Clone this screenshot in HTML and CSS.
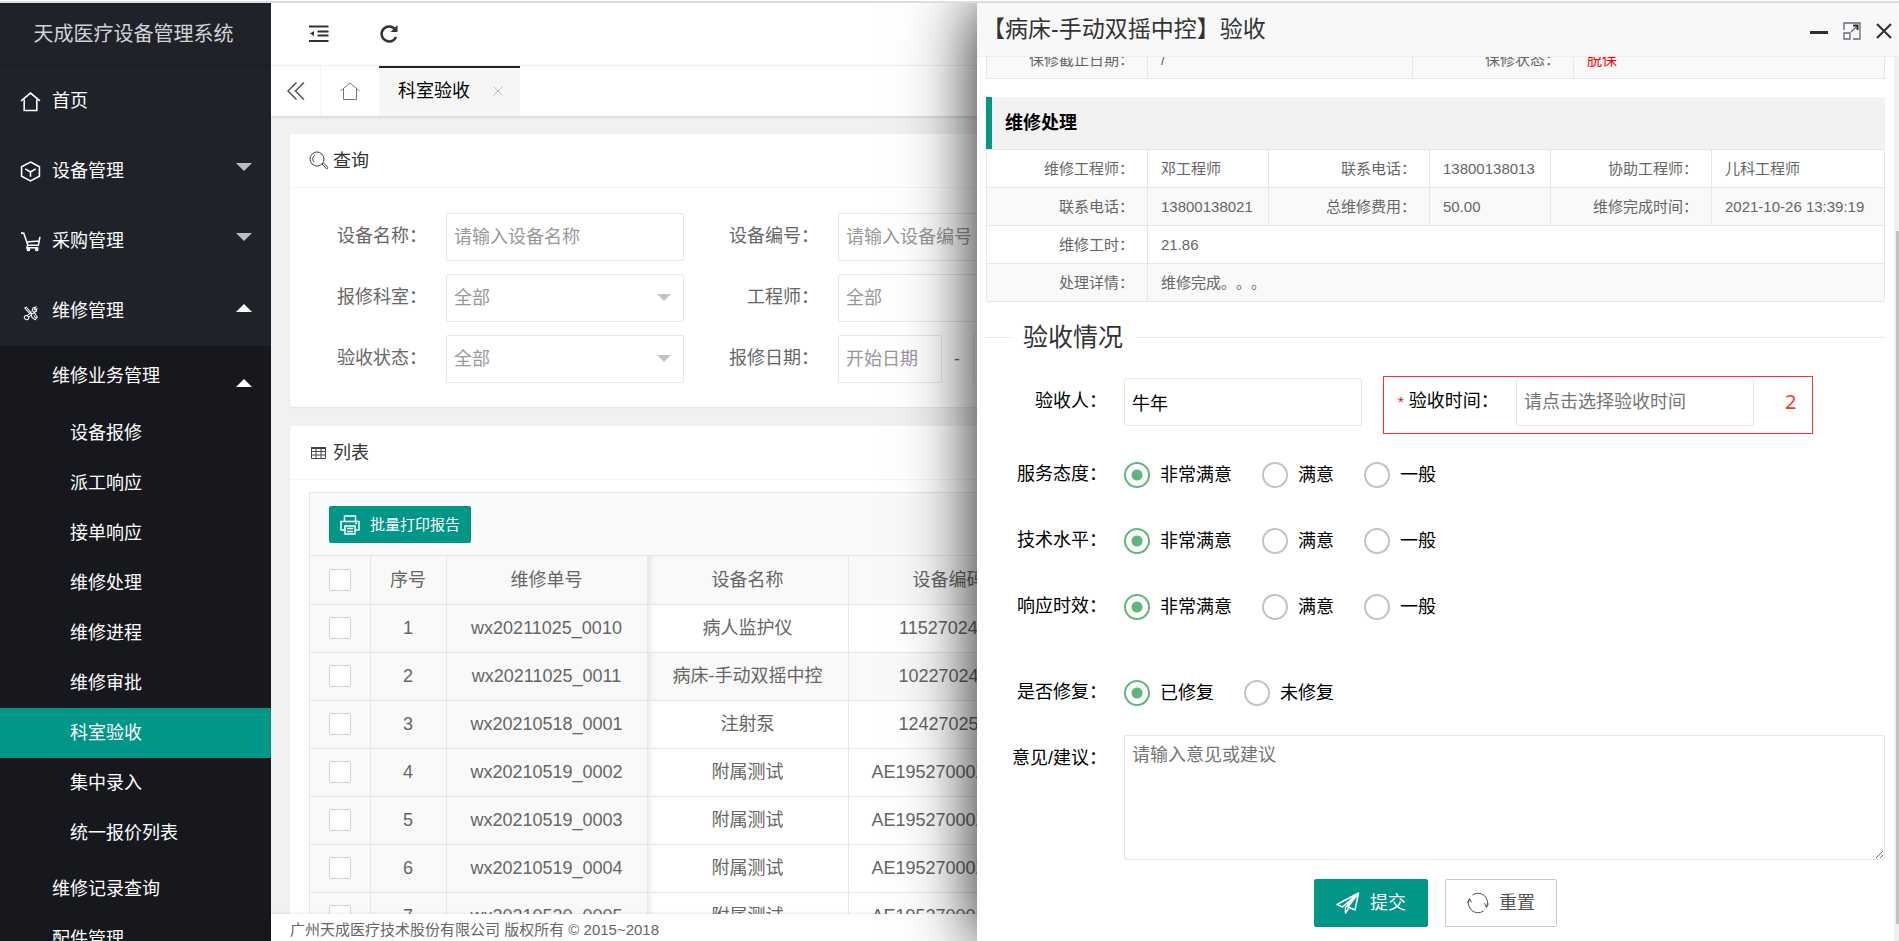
FILE: index.html
```html
<!DOCTYPE html>
<html lang="zh-CN">
<head>
<meta charset="utf-8">
<title>天成医疗设备管理系统</title>
<link rel="stylesheet" href="styles.css">
</head>
<body>
<div class="app">
  <aside class="sidebar">
    <h1 class="brand">天成医疗设备管理系统</h1>
    <nav class="menu">
      <a class="menu-item" href="#">
        <svg class="menu-icon" viewBox="0 0 20 20"><path d="M1 9.500 10 2l9 7.500M4 8v10.500h12V8"/></svg>首页</a>
      <a class="menu-item" href="#">
        <svg class="menu-icon" viewBox="0 0 20 20"><path d="M10 1l8.500 4.500v9L10 19l-8.500-4.500v-9zM5 7.500l5 3 5-3M10 10.500V15"/></svg>设备管理<span class="arrow"></span></a>
      <a class="menu-item" href="#">
        <svg class="menu-icon" viewBox="0 0 20 20"><path d="M1 2h2.500l4 11.500h10L19 5.500M6 10.500l12-1M7.500 13.500l-1 2.500h11"/><circle cx="8" cy="17.500" r="1"/><circle cx="16" cy="17.500" r="1"/></svg>采购管理<span class="arrow"></span></a>
      <a class="menu-item" href="#">
        <svg class="menu-icon tools" viewBox="0 0 20 20"><path d="M3 4l2-1 6.500 8M3 4l7 7.500M11 11l4-1 3 5-2.500 3-4-3zM16 3l-3 1-1 3 2 2 3-1 .5-3-2 1.500-1-1zM11.500 8.500 6 13M13 10l-5 5M6 13c-3-.5-4.500 2-2.500 4s5 .5 4.500-2zM14 13l2 3"/></svg>维修管理<span class="arrow arrow-up"></span></a>
      <div class="submenu">
        <a class="sub-item" href="#">维修业务管理<span class="arrow arrow-up"></span></a>
        <div class="leaf-list">
          <a class="leaf" href="#">设备报修</a>
          <a class="leaf" href="#">派工响应</a>
          <a class="leaf" href="#">接单响应</a>
          <a class="leaf" href="#">维修处理</a>
          <a class="leaf" href="#">维修进程</a>
          <a class="leaf" href="#">维修审批</a>
          <a class="leaf active" href="#">科室验收</a>
          <a class="leaf" href="#">集中录入</a>
          <a class="leaf" href="#">统一报价列表</a>
        </div>
        <a class="sub-item" href="#">维修记录查询</a>
        <a class="sub-item" href="#">配件管理</a>
      </div>
    </nav>
  </aside>

  <main class="main">
    <header class="topbar">
      <button class="icon-btn" aria-label="收起菜单"><svg width="20" height="18" viewBox="0 0 20 18"><path d="M0 1.500h19.500M8.500 6.500h11M8.500 10.500h11M0 16h19.500" stroke="#333" stroke-width="2" fill="none"/><path d="M1 8.500 5 6v5z" fill="#333"/></svg></button>
      <button class="icon-btn" aria-label="刷新"><svg width="20" height="20" viewBox="0 0 20 20"><path d="M16.500 6A7.500 7.500 0 1 0 17 13" stroke="#333" stroke-width="2.500" fill="none"/><path d="M18.500 1v7h-7z" fill="#333"/></svg></button>
    </header>
    <div class="tabs">
      <button class="tab-ctrl" aria-label="向左"><svg width="18" height="18" viewBox="0 0 18 18"><path d="M9.500.5 1 9l8.500 8.500M17 .5 8.500 9l8.500 8.500" fill="none" stroke="#555" stroke-width="1.500"/></svg></button>
      <button class="tab-home" aria-label="首页"><svg width="20" height="20" viewBox="0 0 20 20"><path d="M.5 10 10 2l9.500 8M3.500 8v10.500h13V8" fill="none" stroke="#777"/></svg></button>
      <div class="tab"><a href="#">科室验收</a><button class="tab-close" aria-label="关闭标签"><svg width="10" height="10" viewBox="0 0 10 10"><path d="M.5.500l9 9M9.500.5l-9 9" stroke="#bbb"/></svg></button></div>
    </div>

    <div class="content">
      <section class="card">
        <h2 class="card-head"><svg width="20" height="20" viewBox="0 0 20 20" fill="none" stroke="#444"><circle cx="8" cy="8" r="7"/><path d="M5 11a4.500 4.500 0 0 1 1-7M13 13l1.500-1 4 4c1 1-.5 2.500-1.500 1.500z"/></svg>查询</h2>
        <form class="search">
          <label for="devName">设备名称：</label><input id="devName" placeholder="请输入设备名称">
          <label for="devNo">设备编号：</label><input id="devNo" placeholder="请输入设备编号">
          <label for="dept">报修科室：</label><span class="select"><select id="dept"><option>全部</option></select></span>
          <label for="eng">工程师：</label><span class="select"><select id="eng"><option>全部</option></select></span>
          <label for="state">验收状态：</label><span class="select"><select id="state"><option>全部</option></select></span>
          <label for="from">报修日期：</label><span class="range"><input id="from" placeholder="开始日期"><span>-</span><input aria-label="结束日期" placeholder="结束日期"></span>
        </form>
      </section>

      <section class="card">
        <h2 class="card-head"><svg width="20" height="20" viewBox="0 0 20 20" fill="none" stroke="#444"><path d="M2.500 4.500h14v11h-14zM2.500 8.500h14M2.500 12h14M7 5v10.500M12 5v10.500"/><path d="M2 5h15" stroke-width="2"/></svg>列表</h2>
        <div class="grid">
          <div class="grid-tools"><button class="btn-print"><svg width="20" height="20" viewBox="0 0 20 20" fill="none" stroke="#fff" stroke-width="1.500"><path d="M4.500 6V1h11v5M4.500 15H1V6.500h18V15h-3.500"/><path d="M5 11h10v8H5zM7 13.500h6M7 16.500h6M15 8.500h2"/></svg>批量打印报告</button></div>
          <table class="list">
            <colgroup><col class="c-check"><col class="c-no"><col class="c-wide"><col class="c-wide"><col class="c-wide"><col></colgroup>
            <thead><tr><th><input type="checkbox" aria-label="全选"></th><th>序号</th><th>维修单号</th><th>设备名称</th><th>设备编码</th><th>报修科室</th></tr></thead>
            <tbody>
              <tr><td><input type="checkbox" aria-label="选择 1"></td><td>1</td><td>wx20211025_0010</td><td>病人监护仪</td><td>1152702401</td><td></td></tr>
              <tr class="current"><td><input type="checkbox" aria-label="选择 2"></td><td>2</td><td>wx20211025_0011</td><td>病床-手动双摇中控</td><td>1022702401</td><td></td></tr>
              <tr><td><input type="checkbox" aria-label="选择 3"></td><td>3</td><td>wx20210518_0001</td><td>注射泵</td><td>1242702501</td><td></td></tr>
              <tr><td><input type="checkbox" aria-label="选择 4"></td><td>4</td><td>wx20210519_0002</td><td>附属测试</td><td>AE1952700020001</td><td></td></tr>
              <tr><td><input type="checkbox" aria-label="选择 5"></td><td>5</td><td>wx20210519_0003</td><td>附属测试</td><td>AE1952700020001</td><td></td></tr>
              <tr><td><input type="checkbox" aria-label="选择 6"></td><td>6</td><td>wx20210519_0004</td><td>附属测试</td><td>AE1952700020001</td><td></td></tr>
              <tr><td><input type="checkbox" aria-label="选择 7"></td><td>7</td><td>wx20210520_0005</td><td>附属测试</td><td>AE1952700020001</td><td></td></tr>
            </tbody>
          </table>
        </div>
      </section>
    </div>
    <footer class="foot">广州天成医疗技术股份有限公司 版权所有 © 2015~2018</footer>
  </main>

  <section class="modal" role="dialog" aria-labelledby="modalTitle">
    <header class="modal-head">
      <h2 id="modalTitle">【病床-手动双摇中控】验收</h2>
      <div class="modal-ctrls">
        <button class="icon-btn" aria-label="最小化"><svg width="18" height="18" viewBox="0 0 18 18"><path d="M0 10.500h18" stroke="#2d2c3b" stroke-width="3"/></svg></button>
        <button class="icon-btn" aria-label="最大化"><svg width="18" height="18" viewBox="0 0 18 18" fill="none" stroke="#667" stroke-width="1.300"><path d="M1 8V1h16v16h-7M1 11h6v6H1zM8 10l6-6"/><path d="M10 3.500h4.500V8" stroke="#2d2c3b" stroke-width="2"/></svg></button>
        <button class="icon-btn" aria-label="关闭"><svg width="16" height="16" viewBox="0 0 16 16"><path d="M1 1l14 14M15 1 1 15" stroke="#2d2c3b" stroke-width="2"/></svg></button>
      </div>
    </header>
    <div class="modal-view">
      <div class="modal-body">
        <table class="info info-top">
          <colgroup><col class="k"><col class="v-half"><col class="k"><col></colgroup>
          <tbody><tr><th>保修截止日期：</th><td>/</td><th>保修状态：</th><td class="alert">脱保</td></tr></tbody>
        </table>
        <h3 class="section-title">维修处理</h3>
        <table class="info">
          <colgroup><col class="k"><col class="v"><col class="k"><col class="v"><col class="k"><col></colgroup>
          <tbody>
            <tr><th>维修工程师：</th><td>邓工程师</td><th>联系电话：</th><td>13800138013</td><th>协助工程师：</th><td>儿科工程师</td></tr>
            <tr><th>联系电话：</th><td>13800138021</td><th>总维修费用：</th><td>50.00</td><th>维修完成时间：</th><td>2021-10-26 13:39:19</td></tr>
            <tr><th>维修工时：</th><td colspan="5">21.86</td></tr>
            <tr><th>处理详情：</th><td colspan="5">维修完成。。。</td></tr>
          </tbody>
        </table>
        <form class="accept">
          <fieldset class="accept-title"><legend>验收情况</legend></fieldset>
          <div class="row row-first">
            <label class="lab" for="who">验收人：</label><input class="field" id="who" value="牛年">
            <div class="marked"><label for="when"><span class="star">*</span>验收时间：</label><input class="field" id="when" placeholder="请点击选择验收时间"><span class="mark-no">2</span></div>
          </div>
          <div class="row row-radio" role="radiogroup" aria-labelledby="g1"><span class="lab" id="g1">服务态度：</span>
            <label class="opt"><input type="radio" name="a" checked>非常满意</label><label class="opt"><input type="radio" name="a">满意</label><label class="opt"><input type="radio" name="a">一般</label></div>
          <div class="row row-radio" role="radiogroup" aria-labelledby="g2"><span class="lab" id="g2">技术水平：</span>
            <label class="opt"><input type="radio" name="b" checked>非常满意</label><label class="opt"><input type="radio" name="b">满意</label><label class="opt"><input type="radio" name="b">一般</label></div>
          <div class="row row-radio" role="radiogroup" aria-labelledby="g3"><span class="lab" id="g3">响应时效：</span>
            <label class="opt"><input type="radio" name="c" checked>非常满意</label><label class="opt"><input type="radio" name="c">满意</label><label class="opt"><input type="radio" name="c">一般</label></div>
          <div class="row row-radio row-fixed" role="radiogroup" aria-labelledby="g4"><span class="lab" id="g4">是否修复：</span>
            <label class="opt"><input type="radio" name="d" checked>已修复</label><label class="opt"><input type="radio" name="d">未修复</label></div>
          <div class="row row-note"><label class="lab" for="note">意见/建议：</label><textarea id="note" placeholder="请输入意见或建议"></textarea></div>
          <div class="actions">
            <button type="submit" class="btn btn-primary"><svg width="24" height="22" viewBox="0 0 24 22" fill="none" stroke="#fff" stroke-width="1.500" stroke-linejoin="round"><path d="M22.500 1 1 12.500l5.500 2.500zM22.500 1l-3.500 17-7-3zM22.500 1 9.500 15.500V21l3-4.500"/></svg>提交</button>
            <button type="reset" class="btn"><svg width="22" height="22" viewBox="0 0 22 22" fill="none" stroke="#555"><path d="M5.500 3a9.500 9.500 0 0 1 14 12M16.500 19a9.500 9.500 0 0 1-14-12"/><path d="M17.500 11l2 4.500 2-4M.5 11l2-4.500 2 4"/></svg>重置</button>
          </div>
        </form>
      </div>
      <div class="scroll-track"><div class="scroll-thumb"></div></div>
    </div>
  </section>
</div>
</body>
</html>
```

FILE: styles.css
```css
* { box-sizing: border-box; }
body {
  margin: 0;
  height: 100vh;
  overflow: hidden;
  border-top: 1px solid #fff;
  background: #f1f1f1;
  color: #666;
  font: 18px/24px "Liberation Sans", "Noto Sans CJK SC", sans-serif;
  text-spacing-trim: space-all;
}
h1, h2, h3 { margin: 0; font-weight: 400; }
a { color: inherit; text-decoration: none; }
button, input, select, textarea { font: inherit; color: inherit; margin: 0; }
button { border: 0; padding: 0; background: none; display: flex; align-items: center; justify-content: center; }
svg { display: block; flex: none; }

.app { position: relative; height: 100%; overflow: hidden; display: flex; border-top: 2px solid #dcdde3; }

/* sidebar */
.sidebar { width: 271px; flex: none; overflow: hidden; background: #20222a; color: #fff; }
.brand { height: 62px; line-height: 62px; text-align: center; font-size: 20px; color: #d2d2d4; padding-right: 4px; box-shadow: 0 1px 2px rgba(0,0,0,.15); }
.menu-item { display: flex; align-items: center; height: 70px; padding: 0 19px 0 20px; }
.menu-item:first-child { margin-top: 1px; }
.menu-icon { width: 21px; height: 21px; margin-right: 11px; fill: none; stroke: #fff; stroke-width: 1.5; }
.tools { stroke-width: 1.2; padding: 3px 2px 0; }
.arrow { margin: 0 0 9px auto; border: 8px solid transparent; border-top-color: #bcbdbf; border-bottom: 0; }
.arrow-up { border-top: 0; border-bottom: 8px solid #fff; margin-bottom: 7px; }
.submenu { background: #16181d; padding-top: 5px; }
.sub-item { display: flex; align-items: center; height: 50px; padding: 0 19px 0 52px; }
.sub-item .arrow { margin: 14px 0 0 auto; }
.leaf-list { padding: 7px 0 6px; }
.leaf { display: flex; align-items: center; height: 50px; padding-left: 70px; }
.active { background: #009688; }

/* main column */
.main { flex: 1; min-width: 0; display: flex; flex-direction: column; }
.topbar { flex: none; height: 63px; display: flex; gap: 50px; padding-left: 38px; background: #fff; border-bottom: 1px solid #f6f6f6; }
.tabs { flex: none; display: flex; height: 50px; background: #fff; box-shadow: 0 1px 3px rgba(0,0,0,.15); z-index: 1; }
.tab-ctrl { width: 50px; border-right: 1px solid #f4f4f4; }
.tab-home { width: 58px; }
.tab { display: flex; align-items: center; gap: 23px; padding: 0 17px 3px 19px; background: #f6f6f6; border-top: 2px solid #20222a; color: #000; }
.content { flex: 1; min-height: 0; overflow: hidden; padding: 18px 19px 0; display: flex; flex-direction: column; gap: 19px; }
.card { flex: none; background: #fff; border-radius: 2px; box-shadow: 0 1px 2px rgba(0,0,0,.05); }
.card-head { display: flex; align-items: center; gap: 4px; height: 54px; padding: 0 19px; font-size: 18px; color: #333; border-bottom: 1px solid #f4f4f4; }
.search { display: grid; grid-template-columns: 137px 238px 116px 238px; column-gap: 19px; row-gap: 13px; padding: 25px 0 24px; align-items: center; }
.search label { text-align: right; padding-bottom: 2px; white-space: nowrap; }
.search input, .search select { width: 100%; height: 48px; padding: 0 7px; border: 1px solid #e6e6e6; border-radius: 2px; background: #fff; color: #999; appearance: none; display: block; }
input::placeholder { color: #999; opacity: 1; }
.select { position: relative; }
.select::after { content: ""; position: absolute; right: 13px; top: 20px; border: 7px solid transparent; border-top-color: #c2c2c2; border-bottom: 0; pointer-events: none; }
.range { display: grid; grid-template-columns: 104px 7px 104px; column-gap: 12px; align-items: center; }

/* record table */
.grid { margin: 12px 19px 0; border: 1px solid #e6e6e6; overflow: hidden; }
.grid-tools { display: flex; padding: 13px 19px 12px; background: #f9f9f9; border-bottom: 1px solid #e6e6e6; }
.btn-print { height: 37px; padding: 0 11px; gap: 10px; background: #009688; color: #fff; font-size: 15px; border-radius: 2px; }
.list { width: 100%; table-layout: fixed; border-collapse: collapse; }
.c-check { width: 60px; }
.c-no { width: 76px; }
.c-wide { width: 201px; }
.list th, .list td { height: 48px; padding: 0; text-align: center; font-weight: 400; border-right: 1px solid #e6e6e6; border-bottom: 1px solid #e6e6e6; }
.list th, .list .current td, .list td:nth-child(-n+3) { background: #f9f9f9; }
.list th:nth-child(4), .list td:nth-child(4) { box-shadow: inset 8px 0 8px -8px rgba(0,0,0,.15); }
.list input { appearance: none; display: block; width: 22px; height: 22px; margin: 0 auto; border: 1px solid #d2d2d2; border-radius: 2px; background: #fff; }
.foot { flex: none; height: 27px; padding-left: 19px; background: #fff; font-size: 15px; line-height: 31px; z-index: 1; box-shadow: 0 -1px 2px rgba(0,0,0,.08); }

/* sliding dialog */
.modal { position: absolute; top: 0; bottom: 0; left: 977px; right: 0; z-index: 2; display: flex; flex-direction: column; background: #fff; color: #000; box-shadow: 0 0 66px rgba(0,0,0,.9); }
.modal-head { flex: none; display: flex; justify-content: space-between; height: 54px; padding: 0 7px 0 5px; background: #f8f8f8; border-bottom: 1px solid #eee; }
.modal-head h2 { font-size: 23px; line-height: 52px; color: #333; }
.modal-ctrls { display: flex; gap: 15px; padding-top: 2px; }
.modal-view { flex: 1; min-height: 0; display: flex; }
.modal-body { flex: 1; min-width: 0; overflow: hidden; padding: 0 9px; }
.scroll-track { flex: none; width: 5px; padding: 174px 0 17px 2px; background: #f0f0f0; }
.scroll-thumb { height: 100%; background: #c1c1c1; }
.info { width: 100%; table-layout: fixed; border-collapse: collapse; font-size: 15px; color: #666; }
.info th, .info td { height: 38px; padding: 0 13px; border: 1px solid #e6e6e6; font-weight: 400; text-align: left; white-space: nowrap; }
.info th { text-align: right; }
.info tr:nth-child(even), .info-top tr { background: #f9f9f9; }
.k { width: 161px; }
.v { width: 121px; }
.v-half { width: 265px; }
.info-top { margin-top: -17px; }
.info .alert { color: #f00; }
.section-title { margin-top: 18px; height: 52px; padding-left: 13px; border-left: 6px solid #009688; border-radius: 0 2px 2px 0; background: #f2f2f2; font-size: 18px; line-height: 52px; font-weight: 700; }
.accept-title { margin: 16px 0 20px; padding: 0; border: 0; border-top: 1px solid #e6e6e6; }
.accept-title legend { margin-left: 25px; padding: 0 12px; font-size: 25px; line-height: 38px; color: #333; }
.row { display: flex; align-items: center; }
.lab { flex: none; width: 138px; padding: 0 17px 2px 0; text-align: right; white-space: nowrap; }
.field { width: 238px; height: 48px; padding: 0 7px; border: 1px solid #e6e6e6; border-radius: 2px; background: #fff; }
.field::placeholder, textarea::placeholder { color: #757575; opacity: 1; }
.marked { display: flex; align-items: center; height: 58px; margin-left: 21px; padding: 0 16px 6px 14px; border: 1px solid #f33; }
.marked label { width: 118px; padding-bottom: 2px; }
.star { color: #f00; font-size: 15px; margin-right: 5px; }
.mark-no { margin-left: 31px; color: #f33; font: 20px/24px "Noto Sans", sans-serif; }
.row-radio { height: 66px; }
.row-first + .row-radio { margin-top: 8px; }
.row-fixed { margin-top: 20px; }
.row-first .lab, .row-first > .field { margin-bottom: 6px; }
.opt { display: flex; align-items: center; gap: 10px; margin-right: 30px; }
.opt input { appearance: none; width: 26px; height: 26px; border: 2px solid #c2c2c2; border-radius: 50%; background: #fff; }
.opt input:checked { border-color: #5fb878; background: radial-gradient(circle, #5fb878 5px, #fff 6px); }
.row-note { align-items: flex-start; margin-top: 9px; }
.row-note .lab { padding-top: 11px; }
.row-note textarea { flex: 1; min-width: 0; height: 125px; padding: 7px; border: 1px solid #e6e6e6; border-radius: 2px; resize: vertical; }
.actions { display: flex; justify-content: center; gap: 17px; margin-top: 19px; }
.btn { height: 48px; padding: 0 21px; gap: 10px; border: 1px solid #c9c9c9; border-radius: 2px; background: #fff; color: #555; }
.btn-primary { background: #009688; border-color: #009688; color: #fff; }
```
